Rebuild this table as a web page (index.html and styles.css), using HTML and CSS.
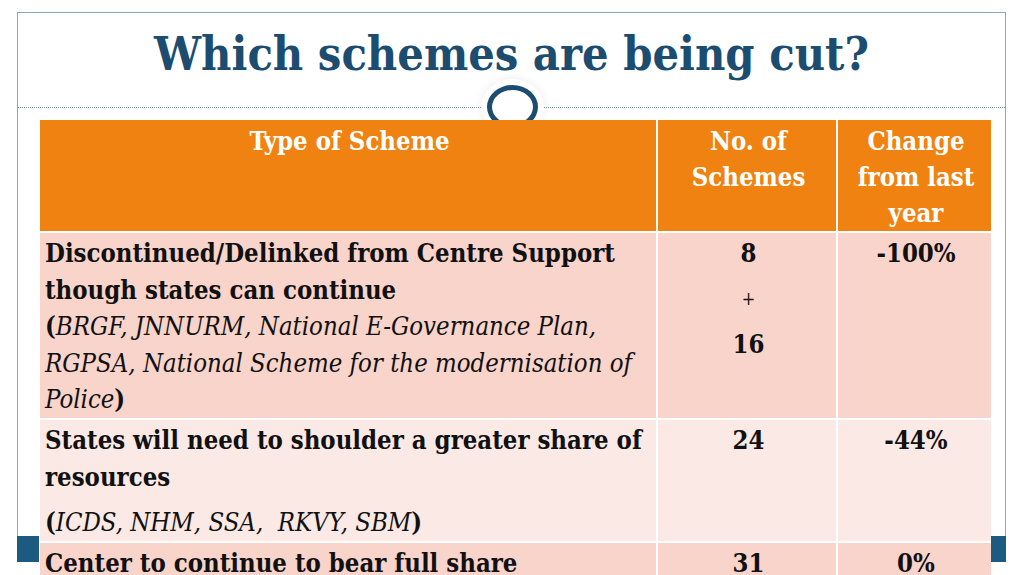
FILE: index.html
```html
<!DOCTYPE html>
<html>
<head>
<meta charset="utf-8">
<link rel="stylesheet" href="styles.css">
</head>
<body>
<div class="slide">
  <div class="frame">
    <h1 class="title">Which schemes are being cut?</h1>
    <div class="rule"></div>
    <table class="grid">
      <colgroup>
        <col class="c1"><col class="c2"><col class="c3">
      </colgroup>
      <thead>
        <tr class="head">
          <th>Type of Scheme</th>
          <th>No. of<br>Schemes</th>
          <th>Change<br>from last<br>year</th>
        </tr>
      </thead>
      <tbody>
        <tr class="dark">
          <td class="desc"><b>Discontinued/Delinked from Centre Support though states can continue</b><br><b>(</b><i>BRGF, JNNURM, National E-Governance Plan, RGPSA, National Scheme for the modernisation of Police</i><b>)</b></td>
          <td class="num"><p><b>8</b></p><p class="plus">+</p><p><b>16</b></p></td>
          <td class="num"><p><b>-100%</b></p></td>
        </tr>
        <tr class="light">
          <td class="desc"><b>States will need to shoulder a greater share of resources</b><p class="gap"><b>(</b><i>ICDS, NHM, SSA,&nbsp; RKVY, SBM</i><b>)</b></p></td>
          <td class="num"><p><b>24</b></p></td>
          <td class="num"><p><b>-44%</b></p></td>
        </tr>
        <tr class="dark">
          <td class="desc"><b>Center to continue to bear full share</b></td>
          <td class="num"><p><b>31</b></p></td>
          <td class="num"><p><b>0%</b></p></td>
        </tr>
      </tbody>
    </table>
  </div>
  <div class="knob"></div>
  <div class="block block-left"></div>
  <div class="block block-right"></div>
</div>
</body>
</html>
```

FILE: styles.css
```css
html, body {
  margin: 0;
  padding: 0;
  background: #ffffff;
}

.slide {
  position: relative;
  width: 1024px;
  height: 575px;
  overflow: hidden;
  font-family: "DejaVu Serif Condensed", "DejaVu Serif", serif;
  font-stretch: condensed;
}

.frame {
  margin: 12px 0 0 17px;
  width: 987px;
  height: 524px;
  border: 1px solid #8ea7b9;
  border-bottom: none;
}

.title {
  margin: 0;
  height: 94px;
  line-height: 82px;
  box-sizing: border-box;
  text-align: center;
  font-size: 46.5px;
  font-weight: bold;
  color: #1c4d70;
}

.rule {
  border-top: 1px dotted #7d93a6;
  height: 0;
}

.grid {
  position: relative;
  z-index: 1;
  margin: 12px 0 0 22px;
  width: 951px;
  border-collapse: collapse;
  table-layout: fixed;
  font-size: 25.5px;
  line-height: 36.6px;
  color: #111111;
}

.c1 { width: 617px; }
.c2 { width: 180px; }
.c3 { width: 154px; }

.grid th, .grid td {
  border: 2px solid #ffffff;
  vertical-align: top;
  padding: 2px 2px 0 5px;
}

.grid tr:first-child th { border-top: none; }
.grid th:first-child, .grid td:first-child { border-left: none; }
.grid th:last-child, .grid td:last-child { border-right: none; }

.head th {
  background: #ef8210;
  color: #ffffff;
  font-weight: bold;
  text-align: center;
  padding-top: 3px;
  line-height: 36px;
}

.dark td { background: #f8d4cb; }
.light td { background: #fbe9e6; }

.num {
  text-align: center;
}

.num p {
  margin: 0;
}

.num p + p {
  margin-top: 9px;
}

.plus {
  font-size: 18px;
}

.gap {
  margin: 9px 0 0 0;
}

.knob {
  position: absolute;
  left: 487px;
  top: 85px;
  width: 41px;
  height: 34px;
  border: 5px solid #1c4d70;
  border-radius: 50%;
  background: #ffffff;
  box-shadow: 0 0 0 6px rgba(255,255,255,0.9), 0 0 8px 6px rgba(200,200,200,0.35);
}

.block {
  position: absolute;
  top: 536px;
  height: 26px;
  background: #1d5a80;
}

.block-left { left: 17px; width: 22px; }
.block-right { left: 991px; width: 15px; }
```
